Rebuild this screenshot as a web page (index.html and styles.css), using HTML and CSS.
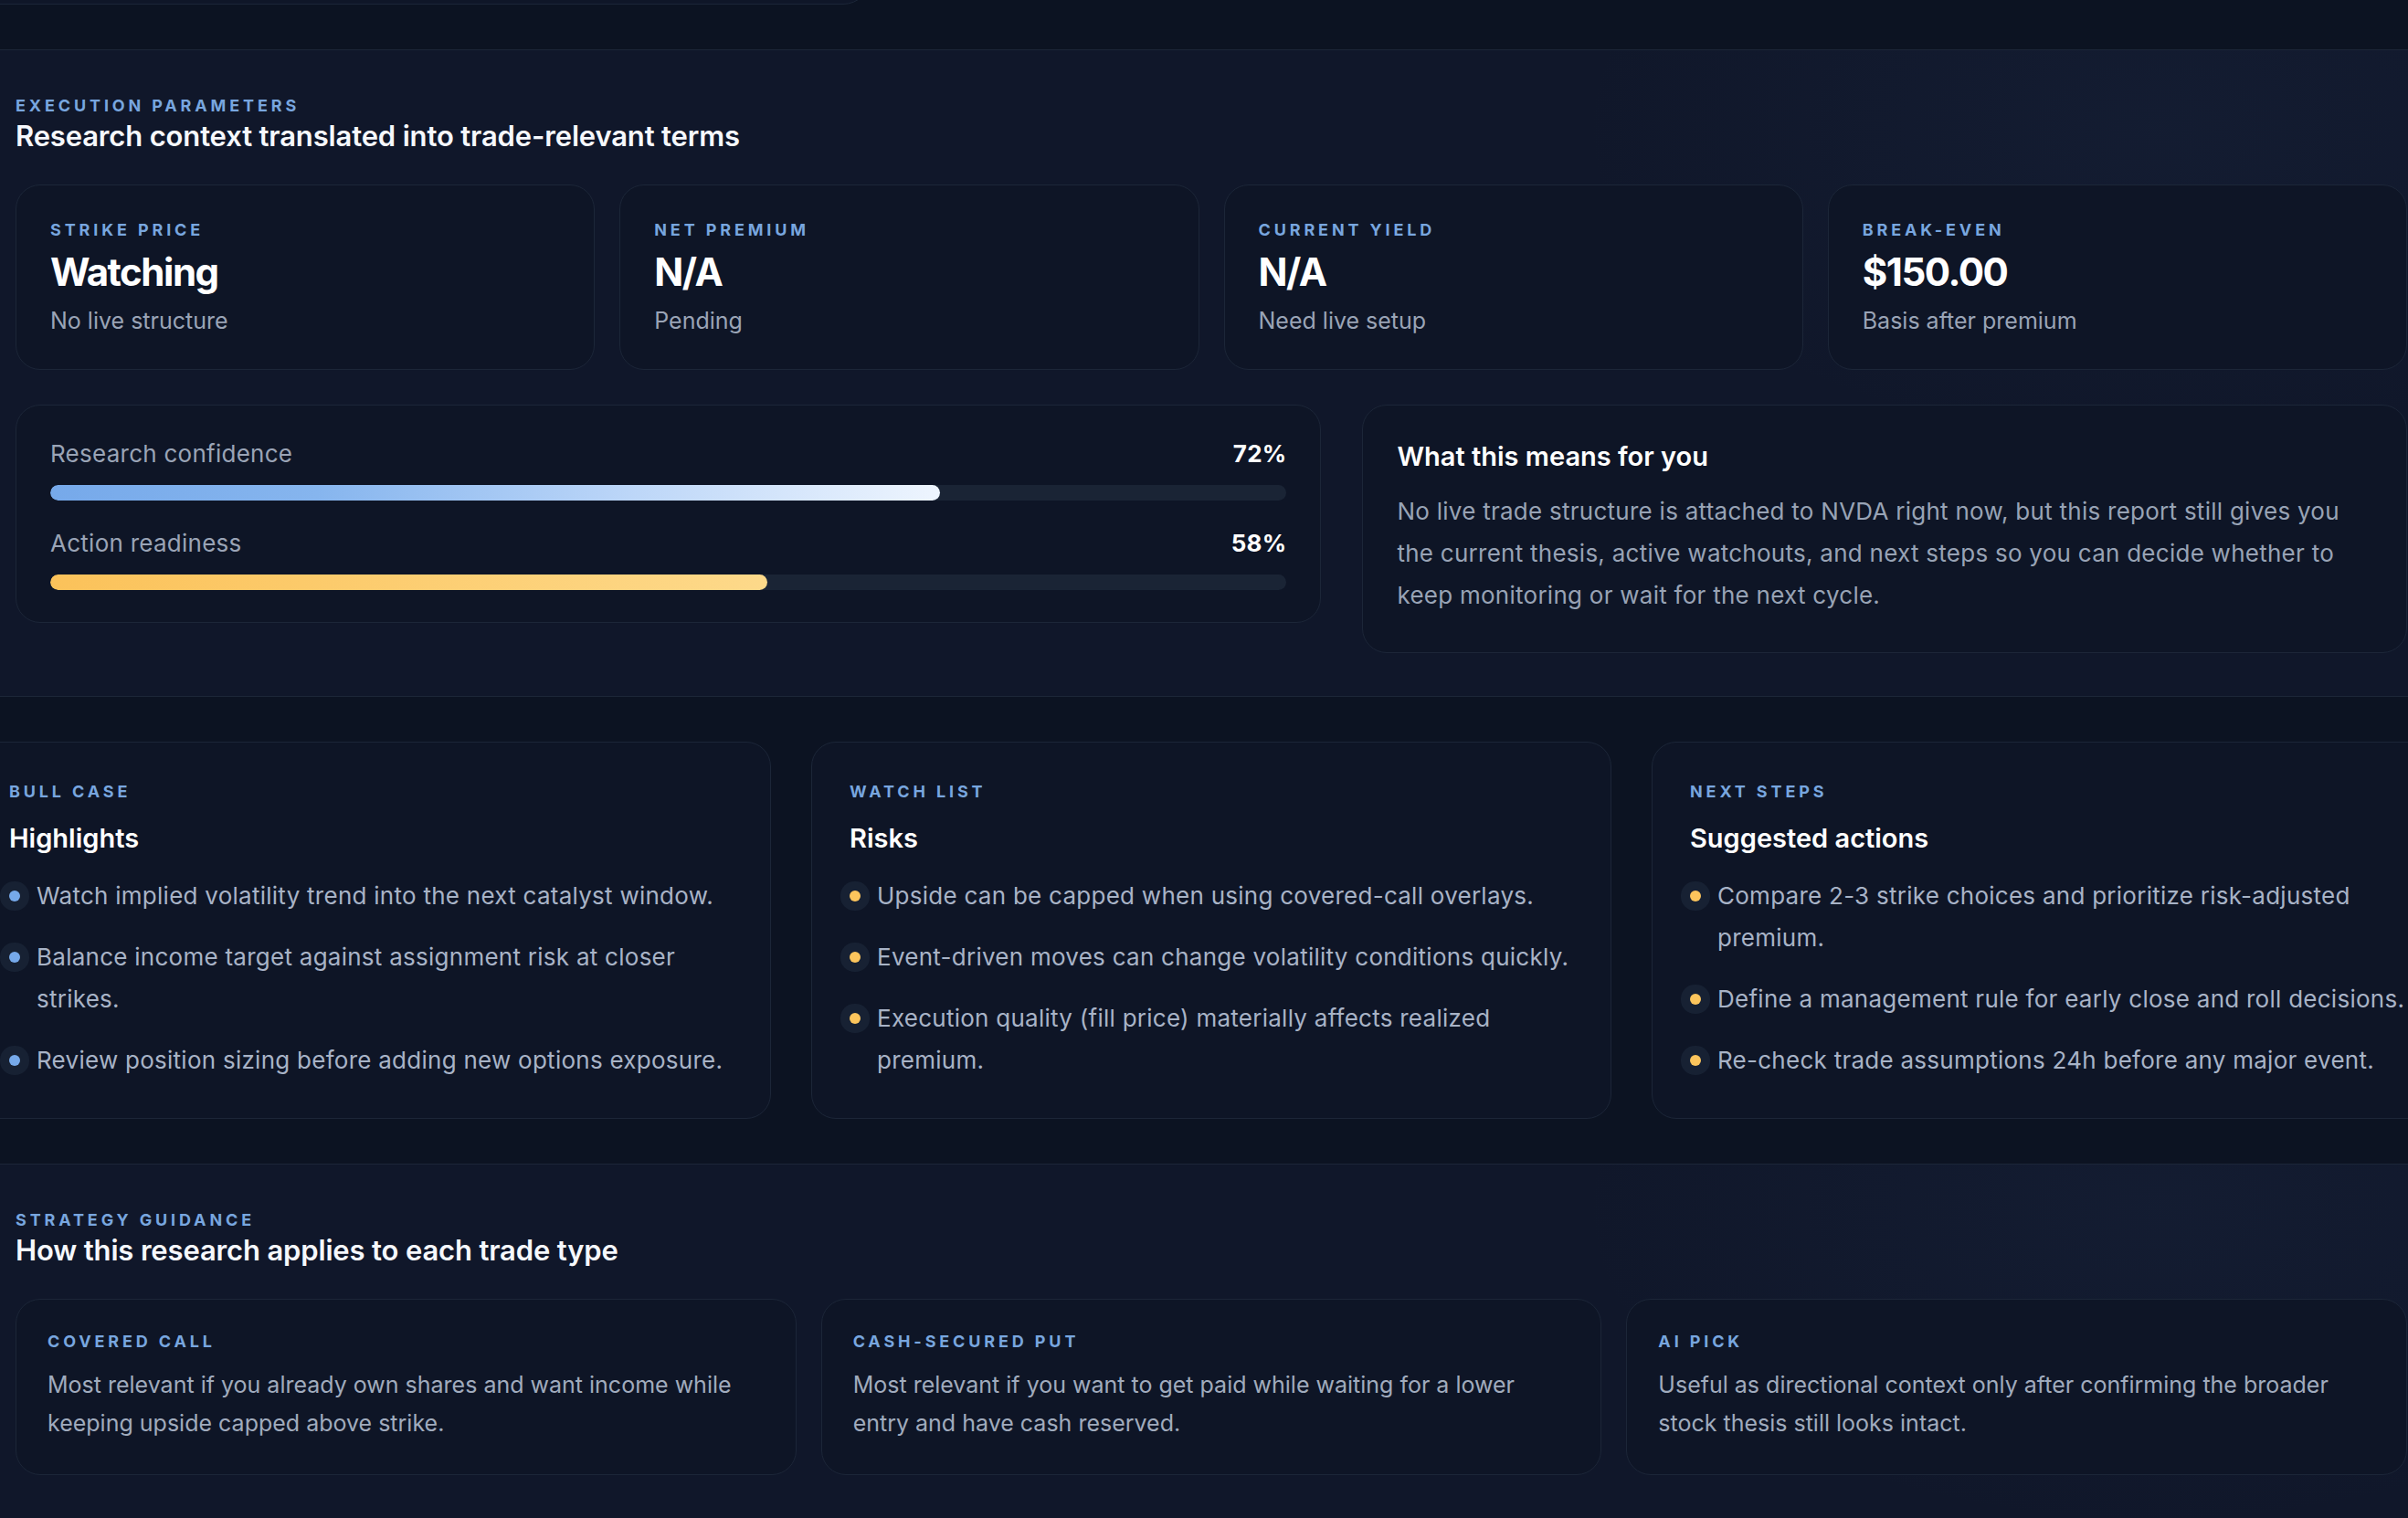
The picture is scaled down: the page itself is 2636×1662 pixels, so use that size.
FILE: index.html
```html
<!DOCTYPE html>
<html lang="en">
<head>
<meta charset="UTF-8">
<title>NVDA research report</title>
<link rel="stylesheet" href="styles.css">
</head>
<body>
<div class="page">
	<div class="top-card"></div>

	<section class="panel">
		<p class="eyebrow">Execution parameters</p>
		<h2 class="section-title">Research context translated into trade-relevant terms</h2>

		<div class="stat-grid">
			<div class="card stat">
				<p class="eyebrow">Strike price</p>
				<p class="stat-value">Watching</p>
				<p class="stat-sub">No live structure</p>
			</div>
			<div class="card stat">
				<p class="eyebrow">Net premium</p>
				<p class="stat-value">N/A</p>
				<p class="stat-sub">Pending</p>
			</div>
			<div class="card stat">
				<p class="eyebrow">Current yield</p>
				<p class="stat-value">N/A</p>
				<p class="stat-sub">Need live setup</p>
			</div>
			<div class="card stat">
				<p class="eyebrow">Break-even</p>
				<p class="stat-value">$150.00</p>
				<p class="stat-sub">Basis after premium</p>
			</div>
		</div>

		<div class="split">
			<div class="card meters">
				<div class="meter">
					<div class="meter-head"><span>Research confidence</span><b>72%</b></div>
					<div class="track"><div class="fill fill-blue" style="width:72%"></div></div>
				</div>
				<div class="meter">
					<div class="meter-head"><span>Action readiness</span><b>58%</b></div>
					<div class="track"><div class="fill fill-gold" style="width:58%"></div></div>
				</div>
			</div>
			<div class="card meaning">
				<h3 class="card-title">What this means for you</h3>
				<p class="meaning-text">No live trade structure is attached to NVDA right now, but this report still gives you the current thesis, active watchouts, and next steps so you can decide whether to keep monitoring or wait for the next cycle.</p>
			</div>
		</div>
	</section>

	<div class="insight-grid">
		<div class="card insight">
			<p class="eyebrow">Bull case</p>
			<h3 class="card-title">Highlights</h3>
			<ul class="points blue">
				<li>Watch implied volatility trend into the next catalyst window.</li>
				<li>Balance income target against assignment risk at closer strikes.</li>
				<li>Review position sizing before adding new options exposure.</li>
			</ul>
		</div>
		<div class="card insight">
			<p class="eyebrow">Watch list</p>
			<h3 class="card-title">Risks</h3>
			<ul class="points gold">
				<li>Upside can be capped when using covered-call overlays.</li>
				<li>Event-driven moves can change volatility conditions quickly.</li>
				<li>Execution quality (fill price) materially affects realized premium.</li>
			</ul>
		</div>
		<div class="card insight">
			<p class="eyebrow">Next steps</p>
			<h3 class="card-title">Suggested actions</h3>
			<ul class="points gold">
				<li>Compare 2-3 strike choices and prioritize risk-adjusted premium.</li>
				<li>Define a management rule for early close and roll decisions.</li>
				<li>Re-check trade assumptions 24h before any major event.</li>
			</ul>
		</div>
	</div>

	<section class="panel">
		<p class="eyebrow">Strategy guidance</p>
		<h2 class="section-title">How this research applies to each trade type</h2>

		<div class="strategy-grid">
			<div class="card strategy">
				<p class="eyebrow">Covered call</p>
				<p class="strategy-text">Most relevant if you already own shares and want income while keeping upside capped above strike.</p>
			</div>
			<div class="card strategy">
				<p class="eyebrow">Cash-secured put</p>
				<p class="strategy-text">Most relevant if you want to get paid while waiting for a lower entry and have cash reserved.</p>
			</div>
			<div class="card strategy">
				<p class="eyebrow">AI pick</p>
				<p class="strategy-text">Useful as directional context only after confirming the broader stock thesis still looks intact.</p>
			</div>
		</div>
	</section>
</div>
</body>
</html>
```

FILE: styles.css
```css
* {margin:0; padding:0; box-sizing:border-box;}
li {list-style:none;}

body {
	background:#0c1322;
	font-family:Inter, "Noto Sans", sans-serif;
	color:#f3f6fb;
	overflow:hidden;
}

.page {
	width:2716px;
	margin:-96px 0 0 -32px;
	display:flex;
	flex-direction:column;
	gap:49px;
}

.top-card {
	width:985px;
	height:101px;
	border:1px solid #1c2638;
	border-radius:30px;
	background:#0f1628;
}

.panel {
	border:1px solid #1c2638;
	border-radius:30px;
	padding:47px 48px;
	background:radial-gradient(ellipse 900px 500px at 88% 12%, rgba(60,90,140,.08), transparent 70%), #10172a;
}

.eyebrow {
	font-size:18px;
	line-height:27px;
	font-weight:700;
	letter-spacing:.215em;
	text-transform:uppercase;
	color:#78a6df;
}

.section-title {
	margin-top:2px;
	font-size:31px;
	line-height:36px;
	font-weight:600;
	letter-spacing:-.005em;
	color:#f6f8fc;
}

.card {
	border:1px solid #1c2638;
	border-radius:27px;
	background:#0e1526;
}

/* stat cards */
.stat-grid {
	margin-top:35px;
	display:grid;
	grid-template-columns:repeat(4, 1fr);
	gap:27px;
}
.stat {padding:35px 37px;}
.stat-value {
	margin-top:8px;
	font-size:42px;
	line-height:50px;
	font-weight:700;
	letter-spacing:-.035em;
	color:#fff;
}
.stat-sub {
	margin-top:10px;
	font-size:25px;
	line-height:36px;
	color:#9aa4b6;
}

/* meters + meaning */
.split {
	margin-top:38px;
	display:grid;
	grid-template-columns:1.25fr 1fr;
	gap:45px;
	align-items:start;
}
.meters {padding:35px 37px;}
.meter + .meter {margin-top:29px;}
.meter-head {
	display:flex;
	justify-content:space-between;
	font-size:26px;
	line-height:36px;
	letter-spacing:.01em;
	color:#9aa4b6;
}
.meter-head b {font-weight:700; color:#fff;}
.track {
	margin-top:16px;
	height:17px;
	border-radius:9px;
	background:#1a2435;
	overflow:hidden;
}
.fill {height:100%; border-radius:9px;}
.fill-blue {background:linear-gradient(90deg, #76a9ea 0%, #86b5ee 30%, #bcd6f8 65%, #eef5fe 100%);}
.fill-gold {background:linear-gradient(90deg, #fbc25a 0%, #fcca6a 35%, #fdd98a 100%);}

.meaning {padding:38px 37px 39px;}
.card-title {
	font-size:29px;
	line-height:35px;
	font-weight:600;
	color:#fff;
}
.meaning-text {
	margin-top:20px;
	font-size:26px;
	line-height:46px;
	letter-spacing:.01em;
	color:#98a3b5;
}

/* insight cards */
.insight-grid {
	display:grid;
	grid-template-columns:repeat(3, 1fr);
	gap:44px;
}
.insight {padding:40px 41px;}
.insight .card-title {margin-top:20px; line-height:36px;}
.points {margin-top:22px;}
.points li {
	display:flex;
	gap:18px;
	font-size:26px;
	line-height:46px;
	letter-spacing:.01em;
	color:#a8b3c6;
}
.points li + li {margin-top:21px;}
.points li::before {
	content:"";
	flex:none;
	width:12px;
	height:12px;
	margin-top:17px;
	border-radius:50%;
	box-shadow:0 0 0 10px #172133;
}
.points.blue li::before {background:#76a9ea;}
.points.gold li::before {background:#fcc55c;}

/* strategy */
.strategy-grid {
	margin-top:35px;
	display:grid;
	grid-template-columns:repeat(3, 1fr);
	gap:27px;
}
.strategy {padding:32px 34px 35px;}
.strategy-text {
	margin-top:13px;
	font-size:25px;
	line-height:42px;
	color:#a0abbd;
}
```
